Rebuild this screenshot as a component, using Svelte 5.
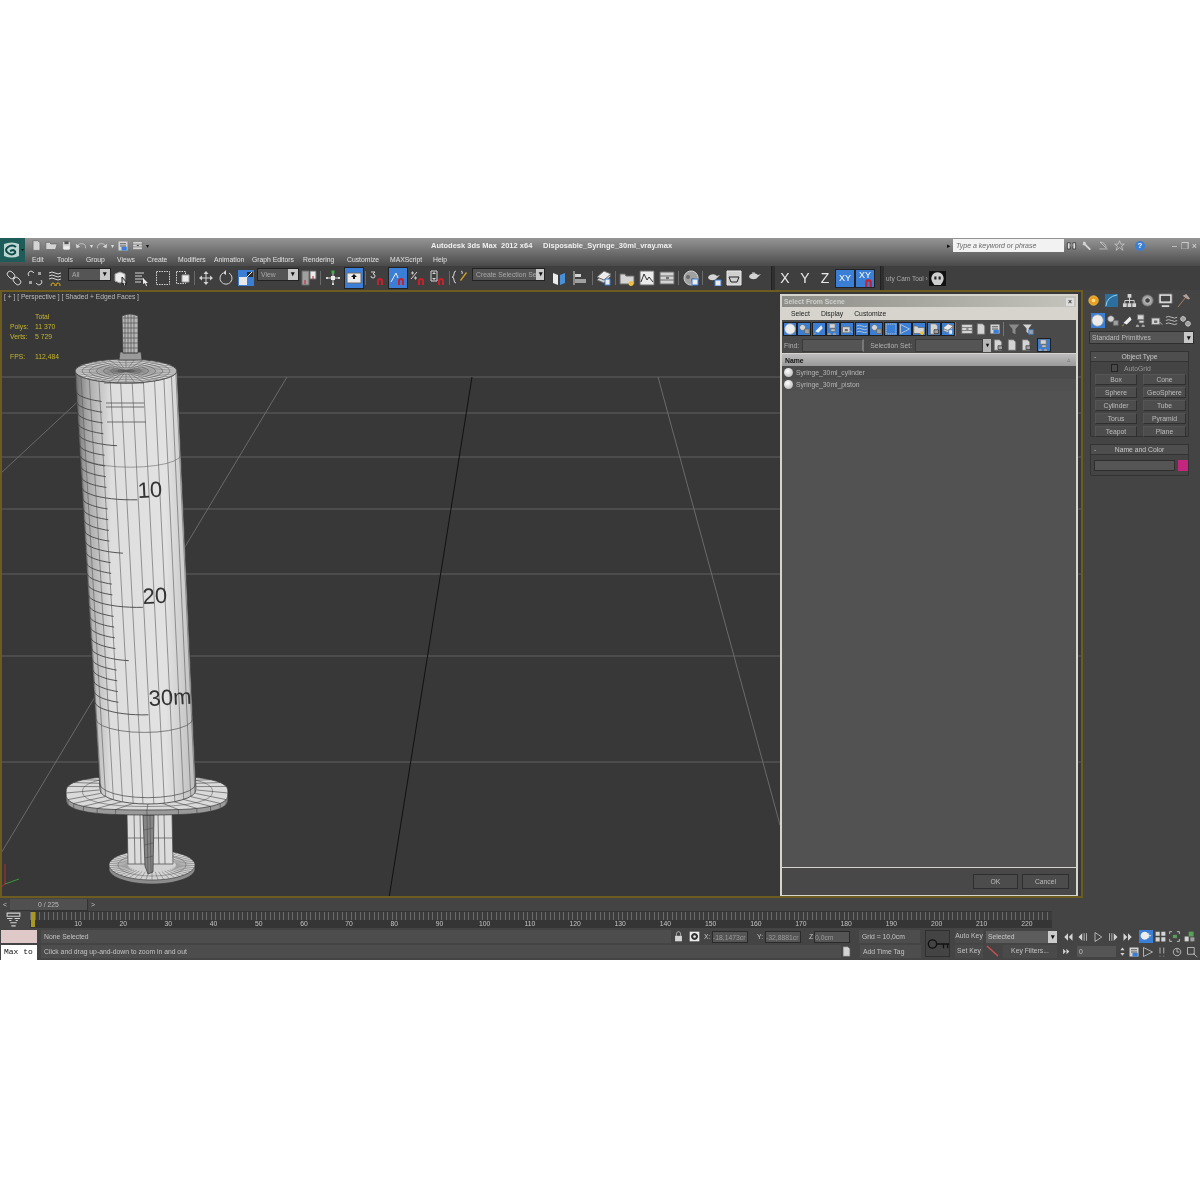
<script>
  // small icons, each is a list of [path, fill, stroke, dash] on a 16x16 box
  const L = "#d4d4d4", M = "#a0a0a0", D = "#6a6a6a", R = "#c8202c", W = "#ececec";
  const mag = ["M8 15v-4a3 3 0 0 1 6 0v4h-2v-4a1 1 0 0 0-2 0v4z", R, "none"];
  const ic = {
    link: [["M2 6a2.800 2.800 0 0 1 4-4l2 2a2.800 2.800 0 0 1-4 4z", "none", L], ["M8 12a2.800 2.800 0 0 1 4-4l2 2a2.800 2.800 0 0 1-4 4z", "none", L], ["M7 7l2 2", "none", L]],
    unlink: [["M2 6a2.800 2.800 0 0 1 4-4l1 1", "none", L], ["M14 10a2.800 2.800 0 0 1-4 4l-1-1", "none", L], ["M11 2h3v3h-3zM2 11h3v3h-3z", M, "none"]],
    bind: [["M2 3q3-2 6 0t6 0M2 6q3-2 6 0t6 0M2 9q3-2 6 0t6 0", "none", L], ["M6 13a2 2 0 1 0 .1 0M11 13a2 2 0 1 0 .1 0", "none", "#e0b020"]],
    sel: [["M2 4l5-2 5 2v7l-5 2-5-2z", W, M], ["M9 7l5 6-2 0 1 3-2 0-1-3-1 1z", L, "#222"]],
    names: [["M2 3h9M2 6h7M2 9h9M2 12h6", "none", L], ["M10 8l5 5-2 0 1 3-1 0-1-3-2 1z", W, "none"]],
    rect: [["M1.500 1.500h13v13h-13z", "none", L, "1.500 1"]],
    cross: [["M1.500 1.500h9v12h-9z", "none", L, "1.500 1"], ["M7 5h7v7h-7z", W, M]],
    move: [["M8 1l2.500 3h-5zM8 15l2.500-3h-5zM1 8l3-2.500v5zM15 8l-3-2.500v5z", L, "none"], ["M8 4v8M4 8h8", "none", L]],
    rotate: [["M11 3a6 6 0 1 1-6 0", "none", L], ["M8 0l-3 3 3 2z", L, "none"]],
    scale: [["M0 0h16v16h-16z", "#3a7fd5", "none"], ["M1 7h8v8h-8z", "#e8e8e8", "none"], ["M9 2h6v5h-6z", "#2b2b2b", "none"], ["M8 8l6-6", "none", W]],
    pivot: [["M1 1h7v14h-7z", M, D], ["M9 1h6v8h-6z", W, D], ["M4 10v4M12 6v3", "none", R]],
    manip: [["M8 1v14M1 8h14", "none", L], ["M6.500 .500h3v3h-3z", "#3ab04a", "none"], ["M6 6h4v4h-4z", W, "none"], ["M1 7h2v2h-2zM13 7h2v2h-2zM7 13h2v2h-2z", L, "none"]],
    keys: [["M1 3h14v10h-14z", W, D], ["M8 4l3 3h-2v2h-2v-2h-2z", "#111", "none"]],
    snap3: [["M2 2h4l-2 2a2 2 0 1 1-2 2", "none", L], mag],
    angle: [["M1 12l5-9 2 5", "none", W], mag],
    pct: [["M1 9l6-7M2 2h1v2h-1zM5 7h1v2h-1z", "none", L], mag],
    spin: [["M1 1h6v10h-6z", "none", L], ["M4 2l2 2h-4zM4 10l2-2h-4z", L, "none"], mag],
    named: [["M4 1q-2 0-2 3t-2 3q2 0 2 3t2 3M9 1q2 0 1 3", "none", L], ["M8 10l6-8 1 1-6 8z", "#d8a020", "none"]],
    mirror: [["M2 3l5 2v10l-5-2z", W, "none"], ["M9 5l5-2v10l-5 2z", "#4a90d8", "none"]],
    align: [["M2 1v14", "none", L], ["M3 4h6v3h-6z", L, "none"], ["M3 9h11v4h-11z", M, "none"]],
    layer: [["M1 10l7-7 7 3-7 7z", L, D], ["M1 7l7-6 7 3-7 6z", W, D], ["M9 9h5v6h-5z", W, "#3a7fd5"]],
    curve: [["M1 4h5l1 2h8v8h-14z", L, D], ["M12 11a2.500 2.500 0 1 0 .1 0", "#f0c040", "none"]],
    graph: [["M1 1h14v14h-14z", W, D], ["M2 12l3-8 3 6 2-3 4 5", "none", "#333"]],
    mat: [["M1 2h14v12h-14z", L, D], ["M1 6h14M1 10h14", "none", D], ["M7 8h3", "none", "#111"]],
    render: [["M8 1a7 7 0 1 0 .1 0", M, L], ["M5 5a2 2 0 1 0 .1 0M10 8a2 2 0 1 0 .1 0", D, "none"], ["M9 9h6v6h-6z", W, "#3a7fd5"]],
    tea: [["M2 8a5 4 0 0 0 9 0l3-3-3 1a5 4 0 0 0-9 2z", L, "none"], ["M9 10h6v6h-6z", W, "#3a7fd5"]],
    teaBox: [["M1 1h14v14h-14z", "#d0d0d0", W], ["M3 7h10l-2 5h-6z", "none", "#222"]],
    teaW: [["M2 7a5 4 0 0 0 9 0l3-3-3 1a5 4 0 0 0-9 2z", L, "none"], ["M5 3h3", "none", L]],
    ball: [["M8 1a7 7 0 1 0 .1 0", W, M]],
    shapes: [["M6 2a4 4 0 1 0 .1 0", L, D], ["M9 8h6v6h-6z", M, D]],
    light: [["M3 11l8-8 2 4-6 6z", W, "none"], ["M3 13l-1 2", "none", "#e0c040"]],
    cam: [["M3 1h8v6h-8zM5 8h6v3h-6z", L, D], ["M3 13a2 2 0 1 0 .1 0M10 13a2 2 0 1 0 .1 0", M, "none"]],
    helper: [["M2 5h10v8h-10z", L, D], ["M5 8h4v3h-4z", D, "none"], ["M12 10l3 3", "none", L]],
    wave: [["M1 4q3-2 7 0t7 0M1 8q3-2 7 0t7 0M1 12q3-2 7 0t7 0", "none", L]],
    gears: [["M5 3a3 3 0 1 0 .1 0M11 9a3 3 0 1 0 .1 0", M, L]],
    sun: [["M8 3a5 5 0 1 0 .1 0", "#f09a20", "#e0c040"], ["M8 6a2 2 0 1 0 .1 0", "#f8e080", "none"]],
    bend: [["M1 1h14v14h-14z", "#2c6f9f", "none"], ["M2 14q1-10 12-12", "none", "#9adcf0"]],
    hier: [["M6 1h4v4h-4zM1 11h4v4h-4zM6 11h4v4h-4zM11 11h4v4h-4z", L, "none"], ["M8 5v6M3 11v-3h10v3", "none", L]],
    motion: [["M8 2a6 6 0 1 0 .1 0", M, D], ["M8 5a3 3 0 1 0 .1 0", "#444", L]],
    monitor: [["M1 1h14v10h-14z", W, D], ["M3 3h10v6h-10z", "#444", "none"], ["M4 13h8v2h-8z", L, "none"]],
    hammer: [["M2 15l8-10", "none", "#b08468"], ["M7 3l4-2 4 5-2 1-3-2z", "#b0a098", "none"]],
    lock: [["M3 7h10v8h-10z", L, "none"], ["M5 7v-3a3 3 0 0 1 6 0v3", "none", L]],
    selFilter: [["M1 1h14v14h-14z", W, "none"], ["M8 3a5 5 0 1 0 .1 0", "#333", "none"], ["M8 6a2 2 0 1 0 .1 0", W, "none"]],
    key: [["M1 8a3 3 0 1 0 6 0a3 3 0 1 0-6 0zM7 8h9M12 8v3M15 8v3", "none", "#111"]],
    skull: [["M0 1h16v14h-16z", "#111", "none"], ["M8 2a6 6 0 0 0-5 9l2 3h6l2-3a6 6 0 0 0-5-9z", "#cfcfcf", "none"], ["M5 6h2v3h-2zM9 6h2v3h-2z", "#222", "none"]],
    doc: [["M3 1h7l3 3v11h-10z", L, D]],
    docA: [["M3 1h7l3 3v11h-10z", L, D], ["M8 9h6v5h-6z", M, "#333"]],
    funnel: [["M1 2h14l-5 6v7l-4-2v-5z", "#8a8a8a", "none"]],
    funnelB: [["M1 2h12l-4 5v7l-3-2v-5z", L, "none"], ["M9 9h6v6h-6z", M, "#3a7fd5"]],
    first: [["M2 3v10M8 3l-5 5 5 5zM14 3l-5 5 5 5z", L, "none"]],
    prev: [["M7 3l-5 5 5 5zM9 3h1v10h-1zM12 3h1v10h-1z", L, "none"]],
    play: [["M4 2l9 6-9 6z", "none", L]],
    next: [["M9 3l5 5-5 5zM3 3h1v10h-1zM6 3h1v10h-1z", L, "none"]],
    last: [["M14 3v10M8 3l5 5-5 5zM2 3l5 5-5 5z", L, "none"]],
    pan: [["M7 2a5 5 0 1 0 .1 0", W, "none"], ["M12 4v6M9 7h6", "none", W]],
    grid4: [["M2 2h5v5h-5zM9 2h5v5h-5zM2 9h5v5h-5zM9 9h5v5h-5z", L, "none"]],
    brackets: [["M2 5v-3h3M11 2h3v3M14 11v3h-3M5 14h-3v-3", "none", L], ["M6 6h5v4h-5z", "#5aa05a", "none"]],
    boxes: [["M2 8h5v6h-5z", L, "none"], ["M7 2h6v6h-6z", "#5aa05a", "none"], ["M9 9h5v5h-5z", M, "none"]],
    zoomE: [["M2 2h9v9h-9z", "none", L], ["M10 10l5 5", "none", L]],
    fov: [["M2 2l12 6-12 6z", "none", L]],
    walk: [["M4 2v8M4 13v1M9 2v8M9 13v1", "none", L]],
    orbit: [["M8 3a5 5 0 1 0 .1 0", "none", L], ["M8 4v4h3", "none", L]],
    cfg: [["M2 2h12v12h-12z", L, "none"], ["M4 5h8M4 8h8", "none", "#333"], ["M6 9h7v5h-7z", "#3a7fd5", "none"]],
    curves: [["M2 2h12v3h-12zM2 7h5M9 7h5M5 11h6", "none", L], ["M4 9h2M10 9h2M6 14h4", "none", L]],
    spinner: [["M5 2l3 4h-6zM5 14l3-4h-6z", L, "none"]],
    folder: [["M1 4h5l1 2h8l-2 7h-12z", L, D]],
    save: [["M2 2h12v12h-12z", L, D], ["M5 2h6v4h-6z", "#555", "none"], ["M4 9h8v5h-8z", W, "none"]],
    undo: [["M3 9q2-5 7-4t4 6", "none", L], ["M1 5l1 6 5-2z", L, "none"]],
    redo: [["M13 9q-2-5-7-4t-4 6", "none", L], ["M15 5l-1 6-5-2z", L, "none"]],
    binoc: [["M2 4h4v9h-4zM10 4h4v9h-4z", "#e0e0e0", "#222"], ["M6 6h4v3h-4z", "#888", "none"]],
    wrench: [["M2 2l3 1 1 3 7 7-2 2-7-7-3-1z", L, "none"]],
    dish: [["M3 3l8 8M2 13h12", "none", L], ["M3 3q8 0 9 9", "none", L]],
    star: [["M8 1l2 5h5l-4 3 2 6-5-4-5 4 2-6-4-3h5z", "none", L]]
  };

  const main = [
    { w: 20, i: "link", ml: 4 }, { w: 21, i: "unlink" }, { w: 20, i: "bind" },
    { w: 43, dd: "All", ml: 3 },
    { w: 20, i: "sel" }, { w: 20, i: "names" }, { w: 21, i: "rect", ml: 1 }, { w: 19, i: "cross" },
    { sep: 4 },
    { w: 20, i: "move" }, { w: 20, i: "rotate" }, { w: 20, i: "scale" },
    { w: 42, dd: "View", ml: 1 },
    { w: 19, i: "pivot" }, { sep: 5 }, { w: 20, i: "manip" },
    { w: 20, i: "keys", on: 1, ml: 1 }, { sep: 3 },
    { w: 20, i: "snap3" }, { w: 20, i: "angle", on: 1, ml: 1 }, { w: 20, i: "pct" }, { w: 20, i: "spin" },
    { sep: 2 }, { w: 20, i: "named" },
    { w: 73, dd: "Create Selection Se", ml: 2 },
    { w: 20, i: "mirror", ml: 4 }, { w: 20, i: "align", ml: 1 }, { sep: 4 },
    { w: 20, i: "layer" }, { sep: 3 },
    { w: 20, i: "curve" }, { w: 20, i: "graph" }, { w: 19, i: "mat" }, { sep: 5 },
    { w: 20, i: "render" }, { sep: 3 },
    { w: 20, i: "tea" }, { w: 20, i: "teaBox" }, { w: 21, i: "teaW" }
  ];

  const menus = [["Edit", 25], ["Tools", 29], ["Group", 31], ["Views", 30], ["Create", 31], ["Modifiers", 36],
    ["Animation", 38], ["Graph Editors", 51], ["Rendering", 44], ["Customize", 43], ["MAXScript", 43], ["Help", 30]];

  const prims = ["Box", "Cone", "Sphere", "GeoSphere", "Cylinder", "Tube", "Torus", "Pyramid", "Teapot", "Plane"];
  const rulerLabels = Array.from({ length: 22 }, (_, n) => (n + 1) * 10);

  // geometry of the syringe, all of it in page coordinates
  const rad = (d) => (d * Math.PI) / 180;
  const T = { x: 126, y: 371, rx: 51, ry: 12 };
  const E = { x: 148, y: 790, rx: 48, ry: 14 };
  const at = (t, deg) => {
    const k = (a, b) => a + (b - a) * t;
    return [k(T.x, E.x) + k(T.rx, E.rx) * Math.sin(rad(deg)), k(T.y, E.y) + k(T.ry, E.ry) * Math.cos(rad(deg))];
  };
  const arc = (t, d0, d1) => {
    const out = [];
    for (let i = 0; i <= 12; i++) out.push(at(t, d0 + ((d1 - d0) * i) / 12).map((v) => v.toFixed(1)).join(","));
    return out.join(" ");
  };
  const meridians = [-78, -62, -46, -32, -18, -6, 7, 20, 34, 48, 63, 78].map((d) => ({ a: at(0, d), b: at(1, d) }));
  const ticks = Array.from({ length: 30 }, (_, n) => {
    const y = 391 + n * 10.7;
    const end = n % 10 === 9 ? 6 : n % 5 === 4 ? -14 : -30;
    return arc((y - 371) / 419, -86, end);
  });

  const dome = [];
  for (let d = 0; d < 360; d += 10) {
    dome.push([T.x + 51 * Math.sin(rad(d)), T.y + 12 * Math.cos(rad(d))]);
  }
  const domeRings = [1, 0.86, 0.72, 0.58, 0.44, 0.3, 0.16];

  const tipRows = [318, 323, 328, 333, 338, 343, 348, 353];
  const tipCols = [125, 128, 131, 134];

  // squared-off outline for flange
  const sq = (c, d, p) => {
    const s = Math.sin(rad(d)), k = Math.cos(rad(d));
    return [c.x + c.rx * Math.sign(s) * Math.abs(s) ** p, c.y + c.ry * Math.sign(k) * Math.abs(k) ** p];
  };
  const ringPath = (c, p, dy = 0) => {
    const out = [];
    for (let d = 0; d < 360; d += 6) {
      const q = sq(c, d, p);
      out.push(q[0].toFixed(1) + "," + (q[1] + dy).toFixed(1));
    }
    return out.join(" ");
  };
  const radials = (outer, inner, p, step) => {
    const out = [];
    for (let d = 0; d < 360; d += step) out.push({ a: sq(outer, d, p), b: sq(inner, d, 1) });
    return out;
  };
  const flangeC = { x: 147, y: 793, rx: 81, ry: 17 };
  const flangeIn = { x: 148, y: 790, rx: 49, ry: 13 };
  const flangeMid = { x: 147.500, y: 791.500, rx: 65, ry: 15 };
  const flangeLines = radials(flangeC, flangeIn, 0.7, 15);
  const discC = { x: 152, y: 865, rx: 43, ry: 15 };
  const discIn = { x: 152, y: 865, rx: 24, ry: 7 };
  const discMid = { x: 152, y: 865, rx: 34, ry: 11 };
  const discLines = radials(discC, discIn, 1, 8);

  const gridY = [377, 413, 457, 509, 574, 656, 762];
  const dlgBlue = ["ball", "shapes", "light", "cam", "helper", "wave", "shapes", "rect", "fov", "curve", "docA", "layer"];
  const nav = [["pan", 1], ["grid4", 0], ["brackets", 0], ["boxes", 0]];
  const nav2 = ["cfg", "fov", "walk", "orbit", "zoomE"];
</script>

{#snippet icon(name, size = 16)}
  <svg class="ico" width={size} height={size} viewBox="0 0 16 16">
    {#each ic[name] as p}
      <path d={p[0]} fill={p[1]} stroke={p[2]} stroke-dasharray={p[3]} />
    {/each}
  </svg>
{/snippet}

<div class="page">
  <div class="app">
    <header class="head">
      <div class="logo">
        <svg width="24" height="22" viewBox="0 0 24 22">
          <path d="M3 5q8-3 15 0v12q-7 3-15 0z" fill="#cfe3e0" opacity="0.9" />
          <path d="M15 8q-4-3-8 0t0 6 7 0q1-2-2-3l-3 1" fill="none" stroke="#0d4a4a" stroke-width="2" />
          <path d="M20 10h3l-1.500 2z" fill="#111" />
        </svg>
      </div>
      <div class="head-main">
        <div class="title-row">
          <div class="quick">
            {@render icon("doc", 11)}
            {@render icon("folder", 13)}
            {@render icon("save", 11)}
            {@render icon("undo", 12)}
            <span class="q-dot">▾</span>
            {@render icon("redo", 12)}
            <span class="q-dot">▾</span>
            {@render icon("cfg", 12)}
            {@render icon("mat", 11)}
            <span class="q-dot dark">▾</span>
          </div>
          <div class="title">Autodesk 3ds Max&nbsp;&nbsp;2012 x64</div>
          <div class="title file">Disposable_Syringe_30ml_vray.max</div>
          <span class="tri">▸</span>
          <div class="search">Type a keyword or phrase</div>
          <div class="info">
            {@render icon("binoc", 11)}
            {@render icon("wrench", 11)}
            {@render icon("dish", 11)}
            {@render icon("star", 11)}
            <span class="help">?</span>
            <span class="win first-win">–</span><span class="win">❐</span><span class="win">×</span>
          </div>
        </div>
        <nav class="menu">
          {#each menus as m}
            <span style:width="{m[1]}px">{m[0]}</span>
          {/each}
        </nav>
      </div>
    </header>

    <div class="toolbar">
      {#each main as t}
        {#if t.sep}
          <span class="sep" style:width="{t.sep}px"></span>
        {:else if t.dd}
          <div class="tb-dd" style:width="{t.w}px" style:margin-left="{t.ml || 0}px">
            <span>{t.dd}</span><b>▾</b>
          </div>
        {:else}
          <div class="tb" class:on={t.on} style:width="{t.w}px" style:margin-left="{t.ml || 0}px">
            {@render icon(t.i)}
          </div>
        {/if}
      {/each}
      <span class="grip"></span>
      <div class="axis">X</div>
      <div class="axis">Y</div>
      <div class="axis">Z</div>
      <div class="axis on">XY</div>
      <div class="axis on snap">
        XY
        <svg class="axis-mag" width="9" height="9" viewBox="7 7 8 8"><path d={mag[0]} fill={mag[1]} /></svg>
      </div>
      <span class="grip two"></span>
      <div class="cam-tool">uty Cam Tool ›</div>
      <div class="tb">{@render icon("skull", 17)}</div>
    </div>

    <div class="middle">
      <main class="viewport">
        <svg class="scene" width="1079" height="604" viewBox="2 292 1079 604">
          <defs>
            <linearGradient id="barrel" x1="0" x2="1" y1="0" y2="0">
              <stop offset="0" stop-color="#6d6d6d" />
              <stop offset="0.1" stop-color="#a8a8a8" />
              <stop offset="0.3" stop-color="#dedede" />
              <stop offset="0.75" stop-color="#e2e2e2" />
              <stop offset="1" stop-color="#bdbdbd" />
            </linearGradient>
            <clipPath id="barrel-clip">
              <path d="M75 371L100 790A48 14 0 0 0 196 790L177 371z" />
            </clipPath>
          </defs>
          {#each gridY as y}
            <line x1="0" x2="1083" y1={y} y2={y} stroke="#606060" />
          {/each}
          <line x1="287" y1="377" x2="0" y2="855" stroke="#6a6a6a" />
          <line x1="100" y1="381" x2="0" y2="474" stroke="#6a6a6a" />
          <line x1="658" y1="377" x2="780" y2="825" stroke="#6a6a6a" />
          <line x1="472" y1="377" x2="389" y2="898" stroke="#111" />
          <path d="M5 884v-20M5 884l-4 3" fill="none" stroke="#b03030" />
          <path d="M5 884l14-5" stroke="#3a9a3a" />

          <!-- piston -->
          <polygon points={ringPath(discC, 1, 4)} fill="#8c8c8c" stroke="#333" stroke-width="0.6" />
          <polygon points={ringPath(discC, 1)} fill="#d2d2d2" stroke="#333" stroke-width="0.6" />
          <polygon points={ringPath(discMid, 1)} fill="none" stroke="#444" stroke-width="0.4" />
          {#each discLines as l}
            <line x1={l.a[0]} y1={l.a[1]} x2={l.b[0]} y2={l.b[1]} stroke="#444" stroke-width="0.4" />
          {/each}
          <polygon points="127,814 172,814 173,864 128,864" fill="#dcdcdc" stroke="#444" stroke-width="0.7" />
          <path d="M134 814l1 50M140 814l1 50M158 814l1 50M164 814l1 50M127 838h46" stroke="#555" stroke-width="0.7" fill="none" />
          <polygon points="143,815 154,815 153,872 148,874 145,866" fill="#858585" stroke="#333" stroke-width="0.7" />
          <path d="M147 815l1 58M150 815l1 58M144 830l9-2M144 845l9-2M145 858l8-2" stroke="#444" stroke-width="0.5" fill="none" />

          <!-- flange -->
          <polygon points={ringPath(flangeC, 0.7, 5)} fill="#9a9a9a" stroke="#333" stroke-width="0.7" />
          <polygon points={ringPath(flangeC, 0.7)} fill="#dadada" stroke="#333" stroke-width="0.7" />
          <polygon points={ringPath(flangeMid, 0.85)} fill="none" stroke="#444" stroke-width="0.5" />
          {#each flangeLines as l}
            <line x1={l.a[0]} y1={l.a[1]} x2={l.b[0]} y2={l.b[1]} stroke="#444" stroke-width="0.6" />
            <line x1={l.a[0]} y1={l.a[1]} x2={l.a[0]} y2={l.a[1] + (l.a[1] > 793 ? 5 : 0)} stroke="#444" stroke-width="0.6" />
          {/each}

          <!-- barrel -->
          <path d="M75 371L100 790A48 14 0 0 0 196 790L177 371z" fill="url(#barrel)" stroke="#3a3a3a" stroke-width="0.8" />
          {#each meridians as m}
            <line x1={m.a[0]} y1={m.a[1]} x2={m.b[0]} y2={m.b[1]} stroke="#5a5a5a" stroke-width="0.6" />
          {/each}
          <polyline points={arc(0.2, -90, 90)} fill="none" stroke="#666" stroke-width="0.6" />
          <polyline points={arc(0.83, -90, 90)} fill="none" stroke="#555" stroke-width="0.7" />
          <polyline points={arc(0.985, -90, 90)} fill="none" stroke="#444" stroke-width="0.7" />
          {#each ticks as p}
            <polyline points={p} fill="none" stroke="#444" stroke-width="0.9" />
          {/each}
          <path d="M104 383h40M106 403h38M106 407h38M107 422h39" stroke="#555" stroke-width="0.8" fill="none" />
          <g clip-path="url(#barrel-clip)">
            <text class="scale" x="138" y="498" transform="rotate(-3 138 498)">10</text>
            <text class="scale" x="143" y="604" transform="rotate(-3 143 604)">20</text>
            <text class="scale" x="149" y="706" transform="rotate(-3 149 706)">30m</text>
          </g>

          <!-- top of the barrel -->
          <ellipse cx={T.x} cy={T.y} rx={T.rx} ry={T.ry} fill="#d8d8d8" stroke="#333" stroke-width="0.8" />
          {#each domeRings as r}
            <ellipse cx={T.x} cy={T.y} rx={T.rx * r} ry={T.ry * r} fill="none" stroke="#555" stroke-width="0.5" />
          {/each}
          {#each dome as q}
            <line x1={T.x} y1={T.y} x2={q[0]} y2={q[1]} stroke="#555" stroke-width="0.5" />
          {/each}

          <!-- nozzle -->
          <polygon points="120,352 141,352 142,360 119,360" fill="#9a9a9a" stroke="#333" stroke-width="0.7" />
          <path d="M122 316Q130 312 138 316L138 353H123z" fill="#b5b5b5" stroke="#3c3c3c" stroke-width="0.7" />
          {#each tipRows as y}
            <line x1="122.500" x2="138" y1={y} y2={y} stroke="#444" stroke-width="0.6" />
          {/each}
          {#each tipCols as x}
            <line x1={x} x2={x} y1="314" y2="353" stroke="#444" stroke-width="0.6" />
          {/each}
        </svg>

        <div class="vp-label">[ + ] [ Perspective ] [ Shaded + Edged Faces ]</div>
        <div class="stats">
          <span></span><span>Total</span>
          <span>Polys:</span><span>11 370</span>
          <span>Verts:</span><span>5 729</span>
          <span class="gap"></span><span class="gap"></span>
          <span>FPS:</span><span>112,484</span>
        </div>

        <section class="dialog">
          <div class="dlg-title">
            <span>Select From Scene</span>
            <b>×</b>
          </div>
          <div class="dlg-menu"><span>Select</span><span>Display</span><span>Customize</span></div>
          <div class="dlg-tools">
            {#each dlgBlue as n}
              <div class="dt on">{@render icon(n, 12)}</div>
            {/each}
            <span class="dt-sep"></span>
            <div class="dt">{@render icon("mat", 12)}</div>
            <div class="dt">{@render icon("doc", 12)}</div>
            <div class="dt">{@render icon("cfg", 12)}</div>
            <span class="dt-sep"></span>
            <div class="dt">{@render icon("funnel", 12)}</div>
            <div class="dt">{@render icon("funnelB", 12)}</div>
          </div>
          <div class="dlg-find">
            <label for="find-box">Find:</label>
            <div class="field find" id="find-box"></div>
            <label class="set" for="set-box">Selection Set:</label>
            <div class="field setbox" id="set-box"></div>
            <b class="dd-btn">▾</b>
            <div class="dt">{@render icon("docA", 12)}</div>
            <div class="dt">{@render icon("doc", 12)}</div>
            <div class="dt">{@render icon("docA", 12)}</div>
            <div class="dt on last">{@render icon("cam", 12)}</div>
          </div>
          <div class="dlg-head"><b>Name</b><i>▵</i></div>
          <div class="dlg-list">
            <div class="row"><span class="ball"></span><span>Syringe_30ml_cylinder</span></div>
            <div class="row alt"><span class="ball"></span><span>Syringe_30ml_piston</span></div>
          </div>
          <div class="dlg-foot">
            <button>OK</button>
            <button class="cancel">Cancel</button>
          </div>
        </section>
      </main>

      <aside class="panel">
        <div class="tabs">
          {#each ["sun", "bend", "hier", "motion", "monitor", "hammer"] as t}
            <div class="tab">{@render icon(t, 15)}</div>
          {/each}
        </div>
        <div class="subs">
          <div class="sub on">{@render icon("ball", 13)}</div>
          {#each ["shapes", "light", "cam", "helper", "wave", "gears"] as t}
            <div class="sub">{@render icon(t, 13)}</div>
          {/each}
        </div>
        <div class="p-dd"><span>Standard Primitives</span><b>▾</b></div>
        <div class="rollout first-roll">
          <div class="r-head"><i>-</i><span>Object Type</span></div>
          <div class="r-check"><span class="box"></span><span>AutoGrid</span></div>
          <div class="prims">
            {#each prims as p}
              <div class="prim">{p}</div>
            {/each}
          </div>
        </div>
        <div class="rollout">
          <div class="r-head"><i>-</i><span>Name and Color</span></div>
          <div class="name-row"><div class="name-in"></div><div class="swatch"></div></div>
        </div>
      </aside>
    </div>

    <footer class="bottom">
      <div class="slider-row">
        <span class="arrow">&lt;</span>
        <div class="slider">0 / 225</div>
        <span class="arrow">&gt;</span>
      </div>
      <div class="ruler-row">
        <div class="ruler-ico">{@render icon("curves", 17)}</div>
        <div class="ruler">
          <span class="thumb"></span>
          <div class="r-ticks"></div>
          <div class="r-labels">
            {#each rulerLabels as n}
              <span>{n}</span>
            {/each}
          </div>
        </div>
      </div>
      <div class="status">
        <div class="script">
          <div class="pink"></div>
          <div class="listener">Max to</div>
        </div>
        <div class="st-main">
          <div class="st-row">
            <div class="st-box wide">None Selected</div>
            <div class="coords">
              <span class="c-ico">{@render icon("lock", 11)}</span>
              <span class="c-ico sel">{@render icon("selFilter", 11)}</span>
              <span class="c-l">X:</span><div class="c-in">-18,1473cr</div>
              <span class="c-l y">Y:</span><div class="c-in">-32,8881cr</div>
              <span class="c-l z">Z:</span><div class="c-in">0,0cm</div>
            </div>
            <div class="st-box grid">Grid = 10,0cm</div>
          </div>
          <div class="st-row">
            <div class="st-box prompt">Click and drag up-and-down to zoom in and out</div>
            <span class="c-ico tag">{@render icon("doc", 11)}</span>
            <div class="st-box grid tagbox">Add Time Tag</div>
          </div>
        </div>
        <div class="keybox">{@render icon("key", 22)}</div>
        <div class="keys">
          <div class="k-row">
            <div class="k-btn">Auto Key</div>
            <div class="k-dd"><span>Selected</span><b>▾</b></div>
          </div>
          <div class="k-row">
            <div class="k-btn">Set Key</div>
            <svg class="k-slash" width="14" height="13" viewBox="0 0 14 13"><path d="M1 1l11 10" stroke="#c85050" stroke-width="1.500" /></svg>
            <div class="k-btn filters">Key Filters...</div>
          </div>
        </div>
        <div class="transport">
          <div class="t-row">
            {#each ["first", "prev", "play", "next", "last"] as t}
              <span class="t-b">{@render icon(t, 12)}</span>
            {/each}
          </div>
          <div class="t-row">
            <span class="t-b">{@render icon("last", 9)}</span>
            <div class="t-in">0</div>
            <span class="t-spin">{@render icon("spinner", 11)}</span>
          </div>
        </div>
        <div class="navs">
          <div class="t-row nv">
            {#each nav as n}
              <span class="nb" class:on={n[1]}>{@render icon(n[0], 13)}</span>
            {/each}
          </div>
          <div class="t-row nv2">
            {#each nav2 as n}
              <span class="nb">{@render icon(n, 12)}</span>
            {/each}
          </div>
        </div>
      </div>
    </footer>
  </div>
</div>

<style>
  :global(body) {
    margin: 0;
    background: #fff;
  }
  .page {
    width: 1200px;
    height: 1200px;
    padding-top: 238px;
    box-sizing: border-box;
    font-family: "Liberation Sans", Arial, sans-serif;
    font-size: 6.800px;
    color: #c4c4c4;
    overflow: hidden;
  }
  .app {
    height: 722px;
    background: #444;
    display: flex;
    flex-direction: column;
    /* the reference is a scaled-down capture, everything is slightly soft */
    filter: blur(0.35px);
  }
  .ico {
    display: block;
    flex: none;
    stroke-width: 1;
  }

  /* title + menu */
  .head {
    height: 28px;
    display: flex;
    background: linear-gradient(#959595, #4a4a4a);
  }
  .logo {
    width: 25px;
    height: 24px;
    background: #1d5c58;
    display: flex;
    align-items: center;
    justify-content: center;
  }
  .head-main {
    flex: 1;
    min-width: 0;
  }
  .title-row {
    height: 15px;
    display: flex;
    align-items: center;
  }
  .quick {
    width: 406px;
    flex: none;
    display: flex;
    align-items: center;
    gap: 3px;
    padding-left: 6px;
    box-sizing: border-box;
  }
  .q-dot {
    font-size: 6px;
    color: #ddd;
  }
  .q-dot.dark {
    color: #111;
  }
  .title {
    width: 112px;
    flex: none;
    font-weight: bold;
    font-size: 7.500px;
    color: #f0f0f0;
    white-space: nowrap;
  }
  .title.file {
    width: 404px;
  }
  .tri {
    width: 6px;
    flex: none;
    font-size: 7px;
    color: #111;
  }
  .search {
    width: 111px;
    height: 13px;
    flex: none;
    line-height: 13px;
    padding-left: 3px;
    box-sizing: border-box;
    background: #f2f2f2;
    color: #666;
    font-size: 7px;
    font-style: italic;
  }
  .info {
    display: flex;
    flex: none;
    align-items: center;
    gap: 5px;
    padding-left: 2px;
    color: #222;
  }
  .help {
    width: 10px;
    height: 10px;
    margin-left: 5px;
    border-radius: 50%;
    background: #3a7fd5;
    color: #fff;
    font-weight: bold;
    font-size: 8px;
    line-height: 10px;
    text-align: center;
  }
  .win {
    width: 7px;
    margin-left: -2px;
    font-size: 9px;
    color: #ddd;
    text-align: center;
  }
  .win.first-win {
    margin-left: 21px;
  }
  .menu {
    height: 13px;
    display: flex;
    align-items: center;
    padding-left: 7px;
    color: #e2e2e2;
  }
  .menu span {
    flex: none;
  }

  /* main toolbar */
  .toolbar {
    height: 24px;
    display: flex;
    align-items: center;
    background: #3f3f3f;
  }
  .tb {
    height: 22px;
    flex: none;
    display: flex;
    align-items: center;
    justify-content: center;
    box-sizing: border-box;
  }
  .tb.on {
    background: #3a7fd5;
    border: 1px solid #222;
  }
  .sep {
    flex: none;
    height: 14px;
    position: relative;
    display: flex;
    justify-content: center;
  }
  .sep::after {
    content: "";
    width: 1px;
    background: #6a6a6a;
  }
  .tb-dd {
    flex: none;
    height: 13px;
    margin-top: -7px;
    display: flex;
    align-items: center;
    justify-content: space-between;
    box-sizing: border-box;
    background: #555;
    border: 1px solid #222;
    color: #a8a8a8;
    padding-left: 3px;
    overflow: hidden;
    white-space: nowrap;
  }
  .tb-dd b {
    width: 10px;
    height: 100%;
    flex: none;
    background: #c8c8c8;
    color: #111;
    font-size: 7px;
    line-height: 10px;
    text-align: center;
  }
  .grip {
    flex: none;
    width: 4px;
    height: 24px;
    margin: 0 0 0 6px;
    background: #2f2f2f;
    border-left: 1px solid #222;
    box-sizing: border-box;
  }
  .grip.two {
    margin: 0 2px 0 5px;
  }
  .axis {
    flex: none;
    width: 20px;
    height: 19px;
    line-height: 19px;
    text-align: center;
    font-size: 14px;
    color: #e8e8e8;
    position: relative;
  }
  .axis.on {
    font-size: 9px;
    background: #3a7fd5;
    color: #fff;
    border: 1px solid #222;
    box-sizing: border-box;
    line-height: 17px;
  }
  .axis.snap {
    line-height: 11px;
    color: #fff;
  }
  .axis-mag {
    position: absolute;
    right: 1px;
    bottom: 0;
    display: block;
  }
  .cam-tool {
    flex: none;
    width: 43px;
    white-space: nowrap;
    font-size: 6.500px;
    color: #aaa;
  }

  /* middle */
  .middle {
    height: 608px;
    display: flex;
  }
  .viewport {
    width: 1083px;
    height: 608px;
    box-sizing: border-box;
    border: 2px solid #6c5c20;
    background: #383838;
    position: relative;
    overflow: hidden;
    flex: none;
  }
  .scene {
    display: block;
  }
  .scale {
    font-family: "Liberation Sans", Arial, sans-serif;
    font-size: 22px;
    fill: #333;
  }
  .vp-label {
    position: absolute;
    left: 2px;
    top: 1px;
    font-size: 6.700px;
    color: #bdbdbd;
  }
  .stats {
    position: absolute;
    left: 8px;
    top: 20px;
    display: grid;
    grid-template-columns: 25px auto;
    grid-auto-rows: 10px;
    line-height: 10px;
    color: #c4b52a;
  }
  .dialog {
    position: absolute;
    left: 778px;
    top: 2px;
    width: 298px;
    height: 603px;
    box-sizing: border-box;
    background: #d6d4cc;
    border: 2px solid #d6d4cc;
    display: flex;
    flex-direction: column;
  }
  .dlg-title {
    height: 11px;
    display: flex;
    align-items: center;
    justify-content: space-between;
    padding: 0 2px;
    background: linear-gradient(90deg, #8e8e88, #c4c4bc);
    color: #cfcfcf;
    font-weight: bold;
  }
  .dlg-title b {
    width: 8px;
    height: 8px;
    line-height: 8px;
    text-align: center;
    background: #ddd;
    color: #333;
  }
  .dlg-menu {
    height: 13px;
    flex: none;
    display: flex;
    align-items: center;
    padding-left: 9px;
    color: #222;
    gap: 11px;
  }
  .dlg-tools,
  .dlg-find {
    flex: none;
    display: flex;
    align-items: center;
    background: #4a4a4a;
    padding-left: 1px;
  }
  .dlg-tools {
    height: 17px;
    gap: 0.360px;
  }
  .dlg-find {
    height: 16px;
    padding-left: 2px;
    color: #b0b0b0;
  }
  .dt {
    width: 14px;
    height: 14px;
    flex: none;
    display: flex;
    align-items: center;
    justify-content: center;
    box-sizing: border-box;
  }
  .dt.on {
    background: #3a7fd5;
    border: 1px solid #1f1f1f;
  }
  .dt-sep {
    width: 4px;
    height: 14px;
    border-left: 1px solid #777;
    box-sizing: border-box;
    flex: none;
  }
  .dt.last {
    margin-left: 4px;
  }
  .field {
    height: 13px;
    background: #555;
    border: 1px solid #3a3a3a;
    box-sizing: border-box;
    flex: none;
  }
  .field.find {
    width: 62px;
    margin-left: 3px;
    border-right: 2px solid #777;
  }
  label {
    flex: none;
  }
  label.set {
    margin: 0 3px 0 6px;
  }
  .field.setbox {
    width: 68px;
  }
  .dd-btn {
    width: 8px;
    height: 13px;
    line-height: 13px;
    background: #b8b8b8;
    color: #111;
    text-align: center;
    font-size: 6px;
    flex: none;
  }
  .dlg-head {
    height: 12px;
    flex: none;
    margin-top: 1px;
    display: flex;
    align-items: center;
    justify-content: space-between;
    padding: 0 5px 0 3px;
    background: linear-gradient(#bdbdbd, #9a9a9a);
    color: #111;
  }
  .dlg-head i {
    font-style: normal;
    color: #777;
  }
  .dlg-list {
    flex: 1;
    background: #525252;
  }
  .row {
    height: 12.500px;
    display: flex;
    align-items: center;
    gap: 3px;
    padding-left: 2px;
    background: #4b4b4b;
    color: #b4b4b4;
  }
  .row.alt {
    background: #505050;
  }
  .ball {
    width: 9px;
    height: 9px;
    border-radius: 50%;
    background: radial-gradient(circle at 40% 35%, #fff, #aaa);
  }
  .dlg-foot {
    height: 27px;
    flex: none;
    margin-top: 1px;
    background: #484848;
    display: flex;
    align-items: center;
    justify-content: flex-end;
    gap: 4px;
    padding-right: 7px;
  }
  button {
    width: 45px;
    height: 15px;
    padding: 0;
    background: #4c4c4c;
    border: 1px solid #2e2e2e;
    color: #bbb;
    font: inherit;
  }
  button.cancel {
    width: 47px;
  }

  /* command panel */
  .panel {
    flex: 1;
    min-width: 0;
    background: #444;
    padding: 2px 0 0 2px;
    box-sizing: border-box;
  }
  .tabs {
    height: 16px;
    display: flex;
    gap: 2px;
  }
  .tab {
    width: 16px;
    display: flex;
    justify-content: center;
    align-items: center;
  }
  .subs {
    margin-top: 5px;
    height: 15px;
    display: flex;
    gap: 1.200px;
    padding-left: 6px;
  }
  .sub {
    width: 13.500px;
    height: 15px;
    display: flex;
    align-items: center;
    justify-content: center;
  }
  .sub.on {
    background: #3a7fd5;
  }
  .p-dd {
    margin: 3px 6px 0 4px;
    height: 13px;
    display: flex;
    justify-content: space-between;
    align-items: center;
    background: #555;
    border: 1px solid #2e2e2e;
    box-sizing: border-box;
    padding-left: 2px;
    color: #bbb;
  }
  .p-dd b {
    width: 9px;
    height: 100%;
    line-height: 11px;
    background: #c8c8c8;
    color: #111;
    text-align: center;
  }
  .rollout {
    margin: 7px 11px 0 5px;
    border: 1px solid #333;
    border-top: 0;
    border-radius: 2px;
  }
  .first-roll {
    height: 85px;
  }
  .r-head {
    height: 11px;
    display: flex;
    align-items: center;
    background: #4e4e4e;
    border: 1px solid #333;
    box-sizing: border-box;
    margin: 0 -1px;
    color: #c8c8c8;
  }
  .r-head i {
    width: 8px;
    font-style: normal;
    padding-left: 3px;
  }
  .r-head span {
    flex: 1;
    padding-right: 11px;
    text-align: center;
  }
  .r-check {
    display: flex;
    align-items: center;
    gap: 6px;
    height: 12px;
    padding-left: 20px;
    color: #999;
  }
  .box {
    width: 7px;
    height: 8px;
    border: 1px solid #222;
    background: #4a4a4a;
    box-sizing: border-box;
  }
  .prims {
    display: grid;
    grid-template-columns: 42px 43px;
    column-gap: 6px;
    grid-auto-rows: 11px;
    row-gap: 2px;
    padding-left: 4px;
  }
  .prim {
    background: #4d4d4d;
    border: 1px solid;
    border-color: #555 #2f2f2f #2f2f2f #555;
    box-sizing: border-box;
    text-align: center;
    line-height: 9px;
    color: #bdbdbd;
  }
  .name-row {
    display: flex;
    gap: 3px;
    height: 20px;
    align-items: center;
    padding-left: 3px;
  }
  .name-in {
    width: 81px;
    height: 11px;
    background: #555;
    border: 1px solid #2e2e2e;
    box-sizing: border-box;
  }
  .swatch {
    width: 10px;
    height: 11px;
    background: #c5267d;
  }

  /* time slider and status */
  .bottom {
    flex: 1;
    min-height: 0;
    background: #444;
    display: flex;
    flex-direction: column;
  }
  .slider-row {
    height: 13px;
    display: flex;
    align-items: center;
  }
  .arrow {
    width: 10px;
    text-align: center;
  }
  .slider {
    width: 78px;
    height: 12px;
    line-height: 12px;
    background: #505050;
    border: 1px solid #333;
    border-width: 0 1px 1px 0;
    box-sizing: border-box;
    text-align: center;
    color: #bbb;
  }
  .ruler-row {
    height: 17px;
    display: flex;
  }
  .ruler-ico {
    width: 30px;
    padding: 0 0 0 5px;
    box-sizing: border-box;
  }
  .ruler {
    width: 1022px;
    background: #353535;
    position: relative;
  }
  .thumb {
    position: absolute;
    left: 1px;
    top: 1px;
    width: 4px;
    height: 15px;
    background: #a89a20;
  }
  .r-ticks {
    height: 8px;
    margin-top: 1px;
    background: repeating-linear-gradient(90deg, #6a6a6a 0, #6a6a6a 1px, #3c3c3c 1px, #3c3c3c 4.520px);
  }
  .r-labels {
    display: flex;
    padding-left: 25.400px;
    height: 7px;
    line-height: 7px;
  }
  .r-labels span {
    width: 45.200px;
    flex: none;
    text-align: center;
  }
  .status {
    height: 32px;
    display: flex;
  }
  .script {
    width: 36px;
    margin-left: 1px;
    flex: none;
  }
  .pink {
    height: 13px;
    margin-top: 2px;
    background: #dfc8c8;
  }
  .listener {
    height: 15px;
    margin-top: 2px;
    background: #fff;
    color: #111;
    font-family: "Liberation Mono", monospace;
    font-size: 8px;
    line-height: 13px;
    padding-left: 3px;
    box-sizing: border-box;
  }
  .st-main {
    width: 882px;
    margin-left: 4px;
    flex: none;
  }
  .st-row {
    height: 13px;
    margin-top: 2px;
    display: flex;
    align-items: center;
  }
  .st-box {
    height: 13px;
    line-height: 13px;
    background: #4d4d4d;
    padding-left: 3px;
    box-sizing: border-box;
    flex: none;
  }
  .st-box.wide {
    width: 630px;
  }
  .st-box.prompt {
    width: 800px;
  }
  .st-box.grid {
    width: 61px;
    margin-left: 10px;
  }
  .st-box.tagbox {
    margin-left: 8px;
  }
  .coords {
    display: flex;
    align-items: center;
    width: 178px;
    flex: none;
  }
  .c-ico {
    display: block;
    margin-left: 2px;
    flex: none;
  }
  .c-ico.sel {
    margin-left: 5px;
  }
  .c-ico.tag {
    margin-left: 0;
  }
  .c-l {
    margin-left: 4px;
    width: 8px;
    flex: none;
  }
  .c-l.y {
    margin-left: 9px;
  }
  .c-l.z {
    margin-left: 8px;
    width: 5px;
  }
  .c-in {
    width: 36px;
    height: 12px;
    line-height: 12px;
    background: #555;
    border: 1px solid #2a2a2a;
    box-sizing: border-box;
    overflow: hidden;
    white-space: nowrap;
    color: #9a9a9a;
    flex: none;
  }
  .keybox {
    width: 25px;
    height: 27px;
    margin: 2px 0 0 2px;
    border: 1px solid #2f2f2f;
    box-sizing: border-box;
    display: flex;
    align-items: center;
    justify-content: center;
    flex: none;
  }
  .keys {
    width: 102px;
    margin-left: 5px;
    flex: none;
  }
  .k-row {
    display: flex;
    align-items: center;
    height: 13px;
    margin-top: 2px;
  }
  .k-btn {
    width: 28px;
    height: 13px;
    line-height: 12px;
    text-align: center;
    background: #4a4a4a;
    flex: none;
    white-space: nowrap;
  }
  .k-btn.filters {
    width: 54px;
    margin-left: 3px;
  }
  .k-slash {
    margin-left: 3px;
    flex: none;
  }
  .k-dd {
    width: 71px;
    height: 12px;
    margin-left: 3px;
    display: flex;
    justify-content: space-between;
    background: #5c5c5c;
    padding-left: 2px;
    box-sizing: border-box;
    line-height: 12px;
    color: #c8c8c8;
  }
  .k-dd b {
    width: 9px;
    background: #ccc;
    color: #111;
    text-align: center;
  }
  .transport {
    width: 65px;
    margin-left: 5px;
    flex: none;
  }
  .t-row {
    height: 13px;
    margin-top: 2px;
    display: flex;
    align-items: center;
    gap: 3px;
  }
  .t-b {
    width: 12px;
    display: block;
    flex: none;
  }
  .t-in {
    width: 39px;
    height: 11px;
    line-height: 11px;
    background: #555;
    padding-left: 2px;
    box-sizing: border-box;
    flex: none;
  }
  .t-spin {
    display: block;
    flex: none;
  }
  .navs {
    flex: 1;
    min-width: 0;
  }
  .nv {
    gap: 1px;
    padding-left: 12px;
  }
  .nv2 {
    gap: 1px;
  }
  .nb {
    width: 13.500px;
    height: 13px;
    display: flex;
    justify-content: center;
    align-items: center;
    flex: none;
  }
  .nb.on {
    background: #3a7fd5;
  }
</style>
